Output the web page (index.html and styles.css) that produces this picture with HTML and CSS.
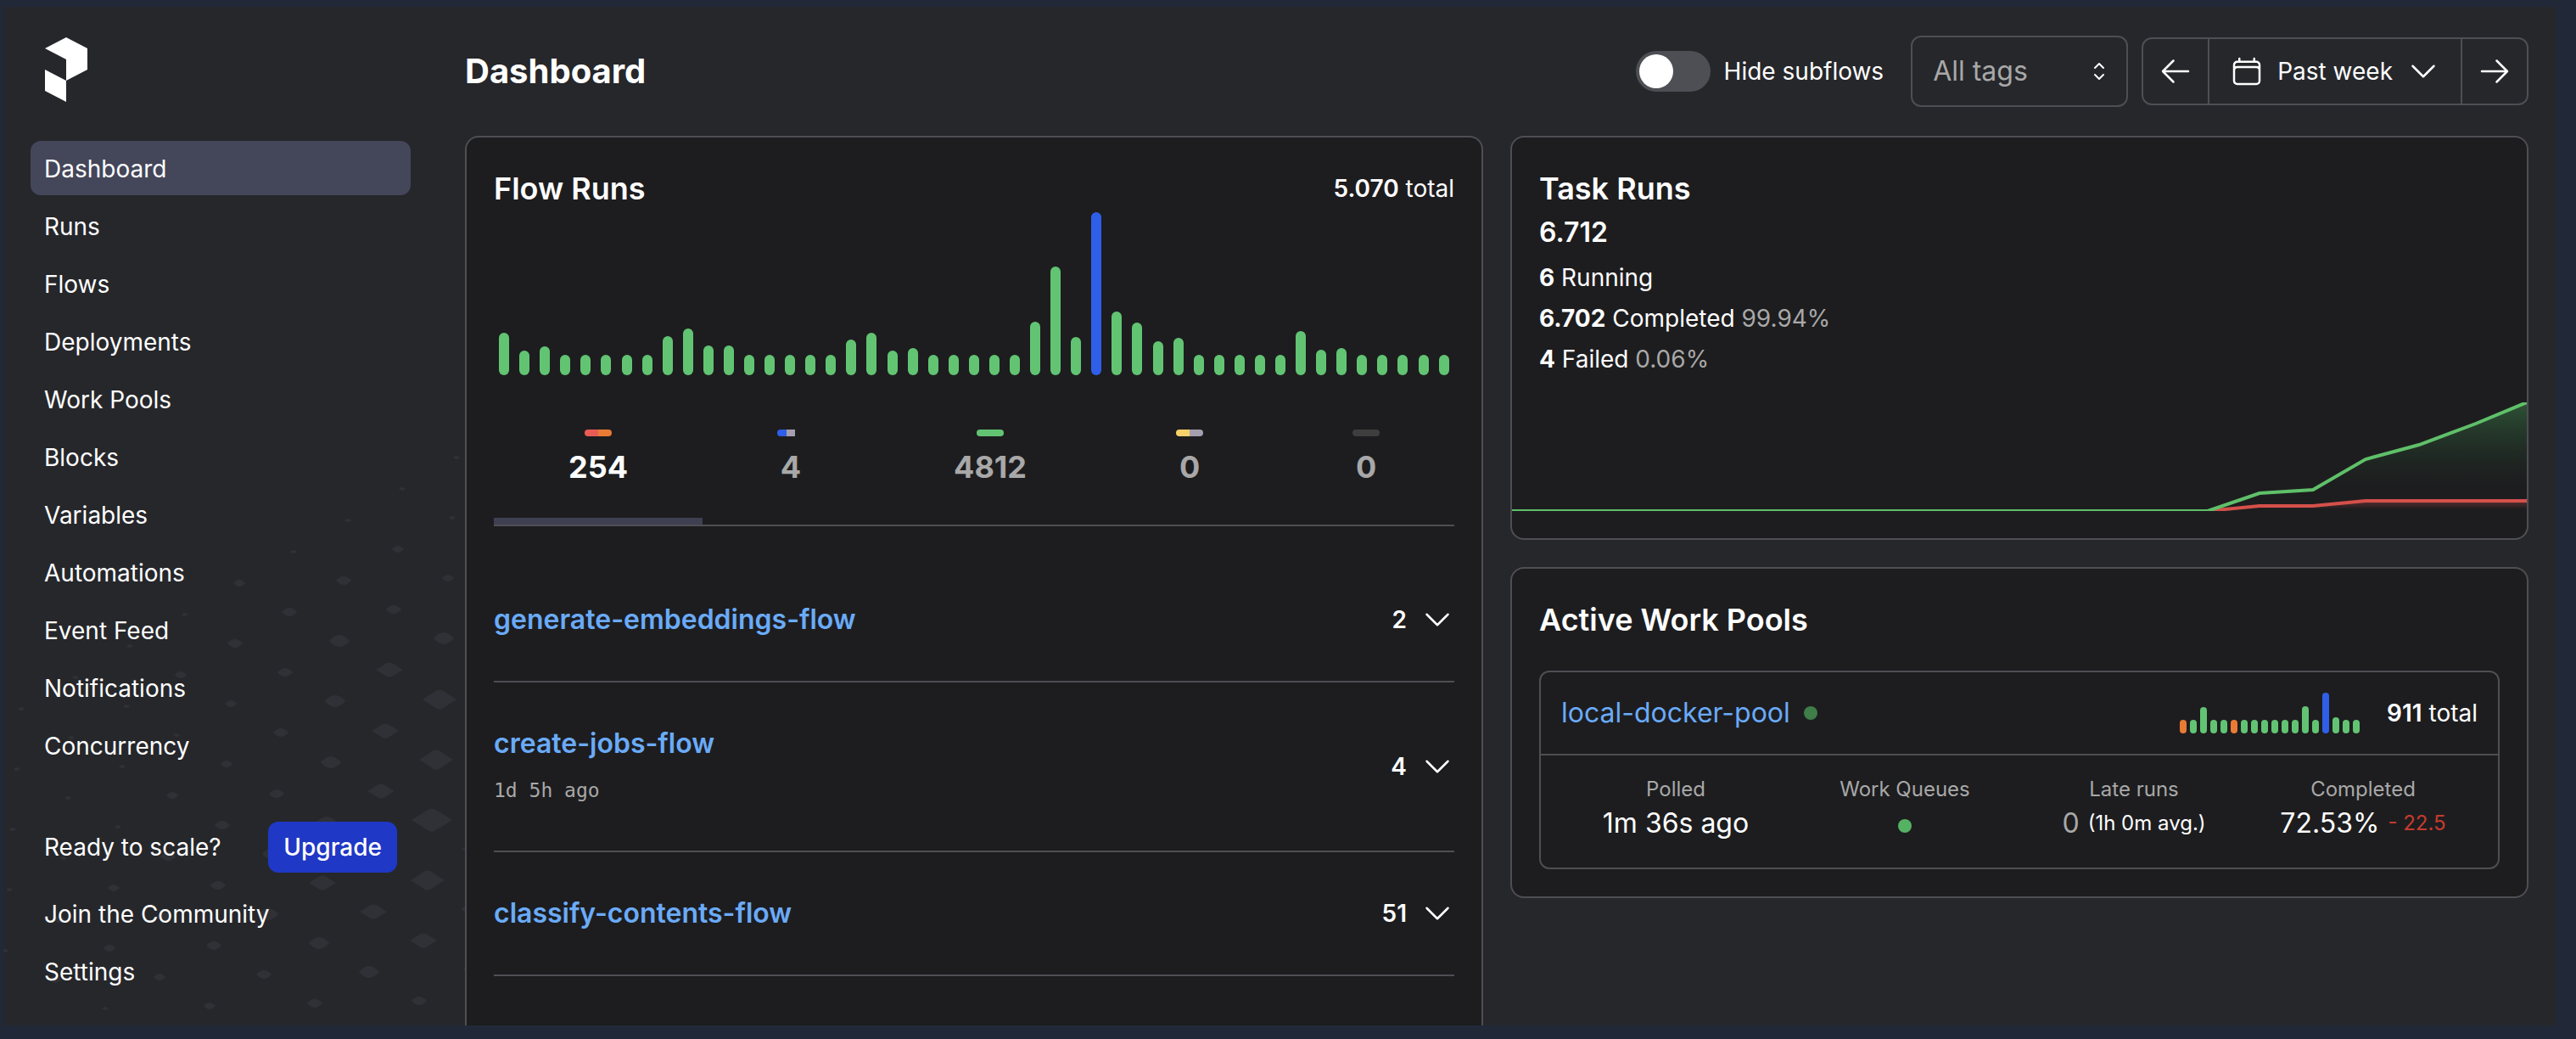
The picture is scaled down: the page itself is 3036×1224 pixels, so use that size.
FILE: index.html
```html
<!DOCTYPE html>
<html lang="en">
<head>
<meta charset="utf-8">
<meta name="viewport" content="width=device-width, initial-scale=1">
<title>Dashboard</title>
<link rel="stylesheet" href="styles.css">
</head>
<body>
<svg class="sprite" aria-hidden="true">
  <symbol id="chevron-down" viewBox="0 0 24 24"><path d="m19.5 8.25-7.5 7.5-7.5-7.5"/></symbol>
  <symbol id="chevron-up-down" viewBox="0 0 24 24"><path d="M8.25 15 12 18.75 15.75 15m-7.5-6L12 5.25 15.75 9"/></symbol>
  <symbol id="arrow-left" viewBox="0 0 24 24"><path d="M10.5 19.5 3 12m0 0 7.5-7.5M3 12h18"/></symbol>
  <symbol id="arrow-right" viewBox="0 0 24 24"><path d="M13.5 4.5 21 12m0 0-7.5 7.5M21 12H3"/></symbol>
  <symbol id="calendar" viewBox="0 0 24 24"><path d="M6.75 3v2.25M17.25 3v2.25M3 18.75V7.5a2.25 2.25 0 0 1 2.25-2.25h13.5A2.25 2.25 0 0 1 21 7.5v11.25m-18 0A2.25 2.25 0 0 0 5.25 21h13.5A2.25 2.25 0 0 0 21 18.75m-18 0v-7.5A2.25 2.25 0 0 1 5.25 9h13.5A2.25 2.25 0 0 1 21 11.25v7.5"/></symbol>
</svg>

<div class="app">
  <svg class="pattern" id="pattern" viewBox="0 0 544 680" aria-hidden="true"></svg>

  <aside class="sidebar">
    <a class="logo" href="#" aria-label="Home">
      <svg width="50" height="76" viewBox="0 0 50 76" aria-hidden="true"><path fill="currentColor" d="M0 13 25 0l25 13v25L25 51V26zM0 38l25 13v25L0 63z"/></svg>
    </a>
    <nav class="nav">
      <a class="nav-item is-active" href="#" aria-current="page">Dashboard</a>
      <a class="nav-item" href="#">Runs</a>
      <a class="nav-item" href="#">Flows</a>
      <a class="nav-item" href="#">Deployments</a>
      <a class="nav-item" href="#">Work Pools</a>
      <a class="nav-item" href="#">Blocks</a>
      <a class="nav-item" href="#">Variables</a>
      <a class="nav-item" href="#">Automations</a>
      <a class="nav-item" href="#">Event Feed</a>
      <a class="nav-item" href="#">Notifications</a>
      <a class="nav-item" href="#">Concurrency</a>
    </nav>
    <div class="nav nav-footer">
      <div class="upsell">
        <span>Ready to scale?</span>
        <button class="upgrade" type="button">Upgrade</button>
      </div>
      <a class="nav-item" href="#">Join the Community</a>
      <a class="nav-item" href="#">Settings</a>
    </div>
  </aside>

  <main class="main">
    <header class="header">
      <h1 class="page-title">Dashboard</h1>
      <div class="filters">
        <label class="toggle"><input class="switch" type="checkbox" role="switch"><span>Hide subflows</span></label>
        <div class="select-wrap">
          <select class="select" aria-label="Tags"><option>All tags</option></select>
          <svg class="icon icon-select" aria-hidden="true"><use href="#chevron-up-down"/></svg>
        </div>
        <div class="range">
          <button class="range-button" type="button" aria-label="Previous period"><svg class="icon" aria-hidden="true"><use href="#arrow-left"/></svg></button>
          <button class="range-button range-current" type="button"><svg class="icon" aria-hidden="true"><use href="#calendar"/></svg><span>Past week</span><svg class="icon" aria-hidden="true"><use href="#chevron-down"/></svg></button>
          <button class="range-button" type="button" aria-label="Next period"><svg class="icon" aria-hidden="true"><use href="#arrow-right"/></svg></button>
        </div>
      </div>
    </header>

    <div class="grid">
      <section class="card flow-runs">
        <div class="card-head">
          <h2 class="card-title">Flow Runs</h2>
          <span><b class="semi">5.070</b> total</span>
        </div>
        <div class="bars" id="flow-bars"></div>
        <div class="states" role="tablist">
          <button class="state is-active" type="button" role="tab" aria-selected="true"><span class="pill"><i class="failed"></i><i class="crashed"></i></span>254</button>
          <button class="state" type="button" role="tab" aria-selected="false"><span class="pill"><i class="running"></i><i class="pending"></i><i></i></span>4</button>
          <button class="state" type="button" role="tab" aria-selected="false"><span class="pill"><i class="completed"></i></span>4812</button>
          <button class="state" type="button" role="tab" aria-selected="false"><span class="pill"><i class="scheduled"></i><i class="pending"></i></span>0</button>
          <button class="state" type="button" role="tab" aria-selected="false"><span class="pill"><i class="cancelled"></i></span>0</button>
        </div>
        <ul class="flows">
          <li class="flow">
            <div class="flow-info"><a class="flow-link" href="#">generate-embeddings-flow</a></div>
            <button class="flow-toggle" type="button">2<svg class="icon" aria-hidden="true"><use href="#chevron-down"/></svg></button>
          </li>
          <li class="flow">
            <div class="flow-info"><a class="flow-link" href="#">create-jobs-flow</a><span class="flow-time">1d 5h ago</span></div>
            <button class="flow-toggle" type="button">4<svg class="icon" aria-hidden="true"><use href="#chevron-down"/></svg></button>
          </li>
          <li class="flow">
            <div class="flow-info"><a class="flow-link" href="#">classify-contents-flow</a></div>
            <button class="flow-toggle" type="button">51<svg class="icon" aria-hidden="true"><use href="#chevron-down"/></svg></button>
          </li>
        </ul>
      </section>

      <div class="column">
        <section class="card task-runs">
          <div class="task-summary">
            <h2 class="card-title">Task Runs</h2>
            <p class="task-total">6.712</p>
            <p class="task-row"><b>6</b> Running</p>
            <p class="task-row"><b>6.702</b> Completed <span class="muted">99.94%</span></p>
            <p class="task-row"><b>4</b> Failed <span class="muted">0.06%</span></p>
          </div>
          <svg class="task-chart" viewBox="0 0 1196 128" preserveAspectRatio="none" aria-hidden="true">
            <defs>
              <linearGradient id="fill-completed" x1="0" y1="0" x2="0" y2="1"><stop offset="0" stop-color="#32603c" stop-opacity=".8"/><stop offset=".8" stop-color="#1d3022" stop-opacity="0"/></linearGradient>
              <linearGradient id="fill-failed" x1="0" y1="0" x2="0" y2="1"><stop offset="0" stop-color="#d5504a" stop-opacity=".35"/><stop offset=".8" stop-color="#d5504a" stop-opacity="0"/></linearGradient>
            </defs>
            <path fill="url(#fill-failed)" d="M820 128 881 122H944L1006 116H1196V128z"/>
            <path class="line line-failed" d="M0 128H820L881 122H944L1006 116H1196"/>
            <path fill="url(#fill-completed)" d="M820 128 881 107 944 103 1006 67 1069 50 1136 25 1196 0V128z"/>
            <path class="line line-completed" d="M0 128H820L881 107 944 103 1006 67 1069 50 1136 25 1196 0"/>
          </svg>
        </section>

        <section class="card work-pools">
          <h2 class="card-title">Active Work Pools</h2>
          <article class="pool">
            <div class="pool-head">
              <a class="pool-link" href="#">local-docker-pool</a>
              <span class="dot dot-dim"></span>
              <div class="mini-bars" id="pool-bars"></div>
              <span><b class="semi">911</b> total</span>
            </div>
            <dl class="pool-stats">
              <div><dt>Polled</dt><dd>1m 36s ago</dd></div>
              <div><dt>Work Queues</dt><dd><span class="dot"></span></dd></div>
              <div><dt>Late runs</dt><dd><span class="pair"><span class="muted">0</span><small>(1h 0m avg.)</small></span></dd></div>
              <div><dt>Completed</dt><dd><span class="pair"><span>72.53%</span><small class="down">- 22.5</small></span></dd></div>
            </dl>
          </article>
        </section>
      </div>
    </div>
  </main>
</div>
<script src="script.js"></script>
</body>
</html>
```
FILE: styles.css
```css
:root {
  --frame: #212938;
  --page: #26272b;
  --card: #1d1d1f;
  --line: #4e4e54;
  --muted: #a8a8a8;
  --link: #6aabf8;
  --green: #62c473;
  --blue: #2f5fe8;
  --orange: #e97b35;
}

* { box-sizing: border-box; }

body {
  display: flex;
  height: 100vh;
  margin: 0;
  padding: 8px 24px 16px 4px;
  overflow: hidden;
  background: var(--frame);
  color: #fff;
  font: 400 28px/48px Inter, "Liberation Sans", sans-serif;
}

a { color: inherit; text-decoration: none; }
button, select { font: inherit; color: inherit; background: none; border: 0; margin: 0; padding: 0; }
h1, h2, p, ul, dl, dd { margin: 0; padding: 0; }
b { font-weight: 700; }
.semi { font-weight: 600; }
.muted { color: var(--muted); }
.sprite { display: none; }

.icon {
  width: 40px;
  height: 40px;
  flex: none;
  fill: none;
  stroke: currentColor;
  stroke-width: 1.5;
  stroke-linecap: round;
  stroke-linejoin: round;
}

.app {
  position: relative;
  display: flex;
  flex: 1;
  min-width: 0;
  overflow: hidden;
  background: var(--page);
}

.pattern {
  position: absolute;
  left: 0;
  bottom: 0;
  width: 544px;
  height: 680px;
  fill: #303136;
}

/* Sidebar */
.sidebar {
  position: relative;
  display: flex;
  flex-direction: column;
  flex: none;
  width: 512px;
  padding: 36px 32px 32px;
}
.logo { display: block; height: 76px; margin: 0 0 46px 17px; line-height: 0; }
.nav { display: flex; flex-direction: column; gap: 4px; }
.nav-item { padding: 9px 16px 7px; border-radius: 12px; }
.nav-item.is-active { background: #444659; }
.nav-footer { margin-top: auto; }
.upsell { display: flex; align-items: center; justify-content: space-between; padding: 12px 16px; }
.upgrade { height: 60px; padding: 0 18px; border-radius: 12px; background: #1f38c6; font-weight: 500; }

/* Header */
.main {
  position: relative;
  display: flex;
  flex-direction: column;
  flex: 1;
  min-width: 0;
  padding: 0 32px;
}
.header { display: flex; align-items: center; justify-content: space-between; padding: 34px 0; }
.page-title { font-size: 40px; font-weight: 700; }
.filters { display: flex; align-items: center; }
.toggle { display: flex; align-items: center; gap: 16px; margin-right: 32px; }
.switch {
  appearance: none;
  width: 88px;
  height: 48px;
  margin: 0;
  padding: 4px;
  border-radius: 24px;
  background: #4e4f54;
}
.switch::before { content: ""; display: block; width: 40px; height: 40px; border-radius: 50%; background: #fff; }
.switch:checked::before { margin-left: auto; }
.select-wrap { position: relative; margin-right: 16px; }
.select {
  display: block;
  appearance: none;
  width: 256px;
  height: 84px;
  padding: 0 24px;
  border: 2px solid var(--line);
  border-radius: 12px;
  color: var(--muted);
  font-size: 32px;
}
.icon-select { position: absolute; top: 26px; right: 18px; width: 32px; height: 32px; pointer-events: none; }
.range { display: flex; height: 80px; border: 2px solid var(--line); border-radius: 12px; }
.range-button { display: flex; align-items: center; gap: 16px; padding: 0 18px; }
.range-current { padding: 0 24px; border: solid var(--line); border-width: 0 2px; }

/* Cards */
.grid { display: grid; grid-template-columns: 1fr 1fr; gap: 32px; flex: 1; min-height: 0; }
.column { display: flex; flex-direction: column; gap: 32px; }
.card { border: 2px solid var(--line); border-radius: 16px; background: var(--card); }
.card-title { font-size: 36px; line-height: 56px; font-weight: 600; }

/* Flow runs */
.flow-runs { padding: 32px 32px 0; border-bottom: 0; border-radius: 16px 16px 0 0; }
.card-head { display: flex; align-items: center; justify-content: space-between; }
.bars { display: flex; align-items: flex-end; justify-content: space-around; height: 192px; }
.bars span { width: 12px; border-radius: 6px; background: var(--green); }
.states { display: flex; margin-top: 32px; border-bottom: 2px solid var(--line); }
.state {
  display: flex;
  flex: 1 1 auto;
  flex-direction: column;
  align-items: center;
  gap: 12px;
  padding: 32px 0 36px;
  border-bottom: 8px solid transparent;
  color: var(--muted);
  font-size: 36px;
  font-weight: 700;
}
.state.is-active { color: #fff; border-color: #3e4052; }
.pill { display: flex; width: 32px; height: 8px; border-radius: 4px; overflow: hidden; }
.pill i { flex: 1; }
.failed { background: #e95b55; }
.crashed { background: var(--orange); }
.running { background: var(--blue); }
.pending { background: #a59eae; }
.completed { background: var(--green); }
.scheduled { background: #f6d169; }
.cancelled { background: #3e3e3e; }

.flows { margin-top: 38px; list-style: none; }
.flow { display: flex; align-items: center; justify-content: space-between; padding: 48px 0; border-bottom: 2px solid var(--line); }
.flow-info { display: flex; flex-direction: column; gap: 8px; }
.flow-link { color: var(--link); font-size: 32px; font-weight: 600; }
.flow-time { color: var(--muted); font: 23px/46px "DejaVu Sans Mono", "Liberation Mono", monospace; }
.flow-toggle { display: flex; align-items: center; gap: 16px; font-weight: 600; }

/* Task runs */
.task-runs { padding: 32px 0; }
.task-summary { padding: 0 32px; }
.task-total { margin-bottom: 5px; font-size: 32px; font-weight: 600; }
.task-chart { display: block; width: 100%; height: 128px; margin-top: 27px; overflow: hidden; }
.line { fill: none; stroke-width: 4; vector-effect: non-scaling-stroke; }
.line-completed { stroke: #5fc069; }
.line-failed { stroke: #d5504a; }

/* Work pools */
.work-pools { padding: 32px; }
.pool { margin-top: 32px; border: 2px solid var(--line); border-radius: 12px; }
.pool-head { display: flex; align-items: center; padding: 24px; border-bottom: 2px solid var(--line); }
.pool-link { margin-right: 16px; color: var(--link); font-size: 32px; }
.dot { display: inline-block; width: 16px; height: 16px; border-radius: 50%; background: #56b263; }
.dot-dim { background: #3f7d49; }
.mini-bars { display: flex; align-items: flex-end; gap: 4px; height: 48px; margin: 0 32px 0 auto; }
.mini-bars span { width: 8px; border-radius: 4px; background: var(--green); }
.bars .is-blue, .mini-bars .is-blue { background: var(--blue); }
.mini-bars .is-orange { background: var(--orange); }
.pool-stats { display: grid; grid-template-columns: repeat(4, 1fr); padding: 24px 24px 28px; text-align: center; }
.pool-stats dt { color: var(--muted); font-size: 24px; line-height: 32px; }
.pool-stats dd { height: 48px; font-size: 32px; }
.pool-stats small { font-size: 24px; }
.pair { display: flex; align-items: center; justify-content: center; gap: 10px; }
.down { color: #c53b2e; }
```
FILE: script.js
```js
// Bar charts: [height, optional colour class]
const flow = [50, 29, 34, 24, 24, 24, 24, 24, 46, 55, 35, 35, 24, 24, 24, 24, 24, 42, 50, 29, 32, 24, 24, 24,
  24, 24, 63, 128, 45, [192, 'is-blue'], 75, 62, 40, 44, 24, 24, 24, 24, 24, 52, 30, 32, 24, 24, 24, 24, 24];
const pool = [[16, 'is-orange'], 16, 31, 16, 16, [16, 'is-orange'], 16, 16, 16, 16, 16, 16, 32, 16, [48, 'is-blue'], 19, 16, 16];

function drawBars(id, data) {
  const root = document.getElementById(id);
  data.forEach((entry) => {
    const [height, name] = [].concat(entry);
    const bar = document.createElement('span');
    bar.style.height = height + 'px';
    if (name) bar.className = name;
    root.append(bar);
  });
}
drawBars('flow-bars', flow);
drawBars('pool-bars', pool);

// Sidebar pattern: a slanted lattice of diamonds; each digit is a size class
const sizes = [null, [4, 2], [7, 4], [9, 5], [12, 7], [16, 9], [20, 12], [24, 14]];
const rows = ['0111121111', '0123332111', '0234321111', '0454322111', '0654333221', '065443322', '07554321', '7654320', '654300', '430000'];
let shapes = '';
rows.forEach((row, i) => {
  [...row].forEach((digit, k) => {
    // the first digit of a row is the column under the edge of the card
    const j = k - 1;
    if (digit === '0') return;
    const [w, h] = sizes[digit];
    const x = Math.round(534 - 4.9 * i - 64.1 * j);
    const y = Math.round(11 + 71.15 * i + 37 * j);
    shapes += digit < 5
      ? `<path d="M${x - w} ${y}Q${x - w / 2} ${y - h} ${x} ${y - h}T${x + w} ${y}Q${x + w / 2} ${y + h} ${x} ${y + h}T${x - w} ${y}z"/>`
      : `<path d="M${x - w} ${y}L${x - 3} ${y - h + 1}Q${x} ${y - h} ${x + 3} ${y - h + 1}L${x + w} ${y}L${x + 3} ${y + h - 1}Q${x} ${y + h} ${x - 3} ${y + h - 1}z"/>`;
  });
});
document.getElementById('pattern').innerHTML = shapes;
```
